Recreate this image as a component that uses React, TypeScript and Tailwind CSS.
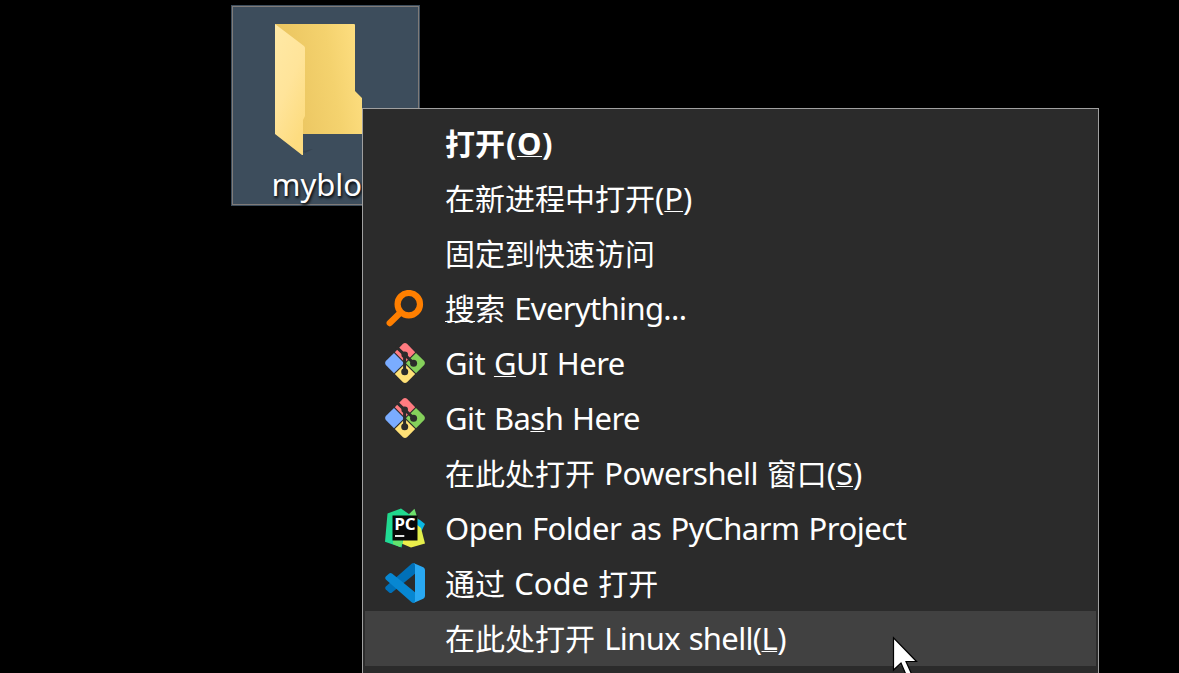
import type { ReactNode } from "react";

function Latin({ children, className = "tracking-[-0.47px]" }: { children: ReactNode; className?: string }) {
  return (
    <span className={`font-['Noto_Sans'] text-[31px] leading-none [word-spacing:1.3px] ${className}`}>{children}</span>
  );
}

function Key({ children }: { children: ReactNode }) {
  return (
    <span className="underline decoration-white decoration-1 underline-offset-[1px] [text-decoration-skip-ink:none]">
      {children}
    </span>
  );
}

function SearchIcon() {
  return (
    <svg width="40" height="40" viewBox="0 0 40 40" fill="none" stroke="#ff7f00" className="mt-[2px]">
      <circle cx="23.8" cy="14.2" r="11.2" strokeWidth="6.2" />
      <path d="M15 23 4.8 33" strokeWidth="6.4" strokeLinecap="round" />
    </svg>
  );
}

function GitIcon() {
  return (
    <svg width="40" height="40" viewBox="0 0 40 40">
      <path d="M18 .8q2-1.4 4 0L30.2 9.2 20 19.4 9.8 9.2Z" fill="#ff7b80" />
      <path d="M9 10 19.2 20.2 9 30.2.8 22q-1.3-2 0-4Z" fill="#7aacff" />
      <path d="M31 10 39.2 18q1.4 2 0 4L31 30.2 20.8 20.2Z" fill="#85d05b" />
      <path d="M9.8 31 20 21l10.2 10L22 39.2q-2 1.4-4 0Z" fill="#ffe177" />
      <g stroke="#2b2b2b" strokeWidth="3" fill="none">
        <path d="m11 3.6 8.6 8.2v17M20 12l8.6 8.2" />
      </g>
      <circle cx="19.7" cy="11.8" r="3.3" fill="#2b2b2b" />
      <circle cx="28.6" cy="20.2" r="3.5" fill="#2b2b2b" />
      <circle cx="19.7" cy="28.8" r="3.5" fill="#2b2b2b" />
    </svg>
  );
}

function PyCharmIcon() {
  return (
    <svg width="40" height="40" viewBox="0 0 40 40">
      <defs>
        <linearGradient id="pg" x1="0" y1="0" x2="0.5" y2="1">
          <stop offset="0" stopColor="#21d789" />
          <stop offset="1" stopColor="#20dc9b" />
        </linearGradient>
        <linearGradient id="py" x1="0" y1="1" x2="1" y2="0">
          <stop offset="0" stopColor="#f5ed4a" />
          <stop offset="1" stopColor="#d9f04c" />
        </linearGradient>
      </defs>
      <path d="M31 10 35 12l5 4-4 8-6-4Z" fill="#0bb8e4" />
      <path d="M22 8 29.5.7 33 12 28 18Z" fill="#6fe06b" />
      <path d="M31 16 36 20l4 15.5-14 4L13 34l4-8Z" fill="url(#py)" />
      <path d="M2.5 5.5 16 .5 26 7.5 20 24 16.5 39.5 0 33.8Z" fill="url(#pg)" />
      <path d="M8 30h8l2 4-3 5-7-3Z" fill="#64e36d" />
      <path d="M7.5 7.5h25v25h-25Z" fill="#080808" />
      <text x="9.2" y="22" fill="#fff" fontFamily="Open Sans" fontWeight="700" fontSize="16.5" textLength="21.5" lengthAdjust="spacingAndGlyphs">PC</text>
      <path d="M10 28h9.3" stroke="#fff" strokeWidth="1.8" />
    </svg>
  );
}

function CodeIcon() {
  return (
    <svg width="40" height="40" viewBox="0 0 40 40">
      <path d="M30 .5v10.2L7 29.5q-1.5 1.1-2.8 0L.8 26.4q-1.2-1.4 0-2.8L26.6.7Q28.2-.4 30 .5Z" fill="#0070b8" />
      <path d="M30 39.5V29.3L7 10.5q-1.5-1.1-2.8 0L.8 13.6q-1.2 1.4 0 2.8l25.8 22.9q1.6 1.1 3.4.2Z" fill="#0787d2" />
      <path d="M29 .2 38.3 4.3Q40 5.2 40 7v26q0 1.8-1.7 2.7L29 39.8q1-1 1-2.6V2.8q0-1.6-1-2.6Z" fill="#29a8f2" />
    </svg>
  );
}

function Item({ icon, active, bold, children }: { icon?: ReactNode; active?: boolean; bold?: boolean; children: ReactNode }) {
  return (
    <li className={`flex h-[55px] shrink-0 ${active ? "bg-[#414141]" : ""} ${bold ? "font-bold" : ""}`}>
      <span className="flex w-[80px] shrink-0 pt-[7px] pl-5">{icon}</span>
      <span className="whitespace-pre text-[30px] leading-[53px]">{children}</span>
    </li>
  );
}

function FolderIcon() {
  return (
    <svg width="90" height="136" viewBox="0 0 90 136" className="ml-[42px] block">
      <defs>
        <linearGradient id="fb" x1="0" y1="0.3" x2="1" y2="0.1">
          <stop offset="0" stopColor="#e9c35e" />
          <stop offset="0.6" stopColor="#f4d26e" />
          <stop offset="1" stopColor="#ffe083" />
        </linearGradient>
        <linearGradient id="ff" x1="0" y1="0" x2="0.5" y2="1">
          <stop offset="0" stopColor="#ffe9a6" />
          <stop offset="0.55" stopColor="#ffe49a" />
          <stop offset="1" stopColor="#fddc80" />
        </linearGradient>
      </defs>
      <path d="M28 127 38 125 30 129Z" fill="#35424f" />
      <path d="M0 0H79q1 0 1 1V67l7 7v36H20Z" fill="url(#fb)" />
      <path d="M0 0 29 22q1 1 1 2V92l-2 4v35l-1 0L0 110Z" fill="url(#ff)" />
    </svg>
  );
}

export default function App() {
  return (
    <main className="relative h-[673px] w-[1179px] overflow-hidden bg-black font-['Noto_Sans_CJK_SC',sans-serif] text-white">
      <div className="absolute top-[5px] left-[231px] h-[201px] w-[189px] border border-[#3d4d5c] bg-[#3d4d5c]">
        <div className="h-full border border-[#7f7b79] pt-[17px]">
          <FolderIcon />
          <p className="mt-[4px] pl-[38.5px] font-['Noto_Sans'] text-[31px] leading-[40px] [text-shadow:1px_2px_3px_#000]">
            myblog
          </p>
        </div>
      </div>

      <ul className="absolute top-[108px] left-[362px] flex h-[640px] w-[737px] flex-col border border-[#a0a0a0] bg-[#2b2b2b] px-[2px] pt-[7px]">
        <Item bold>打开<Latin className="ml-px tracking-[0.5px]">(<Key>O</Key>)</Latin></Item>
        <Item>在新进程中打开<Latin className="tracking-[0px]">(<Key>P</Key>)</Latin></Item>
        <Item>固定到快速访问</Item>
        <Item icon={<SearchIcon />}><Key>搜</Key>索<Latin className="ml-[0.5px] tracking-[-0.65px]"> Everything...</Latin></Item>
        <Item icon={<GitIcon />}><Latin className="tracking-[-0.55px]">Git <Key>G</Key>UI Here</Latin></Item>
        <Item icon={<GitIcon />}><Latin className="tracking-[-0.55px]">Git Ba<Key>s</Key>h Here</Latin></Item>
        <Item>在此处打开<Latin className="ml-[0.5px] tracking-[-0.55px]"> Powershell </Latin>窗口<Latin className="tracking-[0px]">(<Key>S</Key>)</Latin></Item>
        <Item icon={<PyCharmIcon />}><Latin>Open Folder as PyCharm Project</Latin></Item>
        <Item icon={<CodeIcon />}>通过<Latin className="tracking-[-0.05px]"> Code </Latin>打开</Item>
        <Item active>在此处打开<Latin className="ml-[0.5px] tracking-[-0.65px]"> Linux shell(<Key>L</Key>)</Latin></Item>
      </ul>

      <svg className="absolute top-[636px] left-[892px]" width="26" height="42" viewBox="0 0 26 42">
        <path d="M1.5 1.8V34l7.5-7 6 14 5-2-6-13.5h10.5Z" fill="#fff" stroke="#000" strokeWidth="1.2" />
      </svg>
    </main>
  );
}
